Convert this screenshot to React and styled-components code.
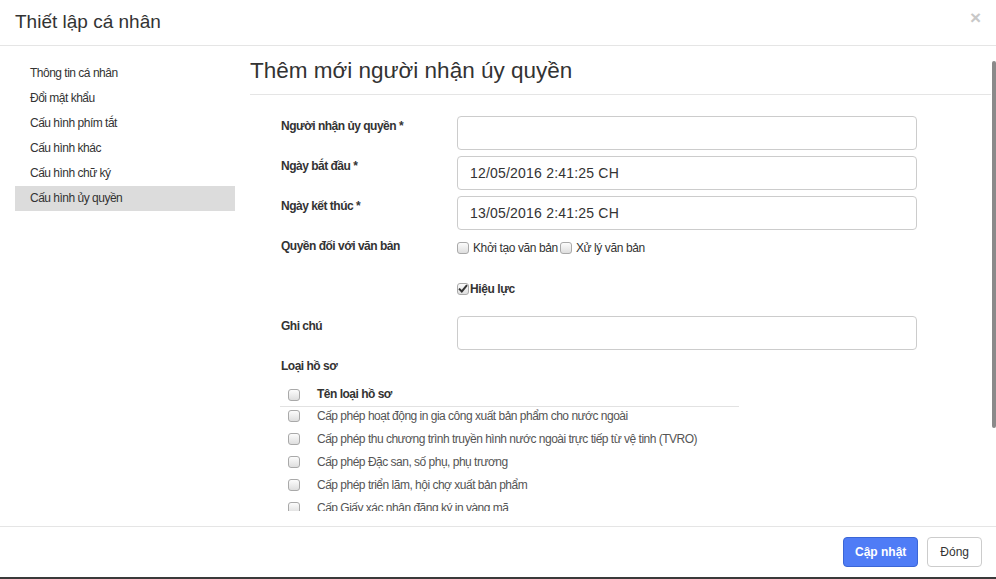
import React from "react";
import styled, { createGlobalStyle } from "styled-components";

const Global = createGlobalStyle`
  html, body { margin: 0; padding: 0; background: #fff; }
  body { font-family: "Liberation Sans", Arial, sans-serif; color: #333; }
  * { box-sizing: border-box; }
`;

const Modal = styled.div`
  width: 996px;
  height: 579px;
  display: flex;
  flex-direction: column;
  background: #fff;
  border-bottom: 2px solid #3a3a3a;
`;

const Header = styled.div`
  height: 46px;
  flex: none;
  display: flex;
  align-items: center;
  justify-content: space-between;
  padding: 0 15px 2px 15px;
  border-bottom: 1px solid #e5e5e5;
`;

const Title = styled.h4`
  margin: 0;
  font-size: 19px;
  font-weight: normal;
  color: #333;
`;

const Close = styled.button`
  border: 0;
  background: none;
  padding: 0;
  margin-bottom: 9px;
  font-family: "Liberation Sans", Arial, sans-serif;
  font-size: 19px;
  font-weight: bold;
  color: #c8c8c8;
  line-height: 1;
  cursor: pointer;
`;

const Body = styled.div`
  height: 480px;
  flex: none;
  display: flex;
  padding: 15px 0 15px 15px;
`;

const Sidebar = styled.ul`
  width: 220px;
  flex: none;
  margin: 0 15px 0 0;
  padding: 0;
  list-style: none;
`;

const NavItem = styled.li`
  height: 25px;
  line-height: 25px;
  padding-left: 15px;
  font-size: 12px;
  letter-spacing: -0.5px;
  color: #333;
  background: ${(p) => (p.$active ? "#dcdcdc" : "transparent")};
`;

const PaneWrap = styled.div`
  position: relative;
  flex: 1;
  height: 450px;
`;

const Pane = styled.div`
  height: 100%;
  overflow: visible;
  clip-path: inset(-12px -12px 0 -12px);
  padding-right: 5px;
`;

const Thumb = styled.div`
  position: absolute;
  top: 0;
  right: 0;
  width: 4px;
  border-radius: 2px;
  background: #8a8a8a;
`;

const PageHeading = styled.h3`
  margin: 0;
  font-size: 22.5px;
  font-weight: normal;
  line-height: 20px;
  padding-bottom: 13px;
  border-bottom: 1px solid #e5e5e5;
  color: #333;
`;

const Form = styled.div`
  padding: 21px 0 0 31px;
`;

const Row = styled.div`
  display: flex;
  height: ${(p) => p.$h || 34}px;
  margin-bottom: ${(p) => (p.$h ? 0 : 6)}px;
`;

const Label = styled.div`
  width: 176px;
  flex: none;
  font-size: 12px;
  font-weight: bold;
  letter-spacing: -0.5px;
  line-height: 17px;
  padding-top: 2px;
  color: #333;
`;

const Input = styled.div`
  width: 460px;
  height: 34px;
  border: 1px solid #ccc;
  border-radius: 4px;
  padding: 0 12px;
  font-size: 14px;
  letter-spacing: 0.2px;
  line-height: 32px;
  color: #333;
`;

const Checks = styled.div`
  display: flex;
  align-items: center;
  height: 17px;
  margin-top: ${(p) => p.$top || 2}px;
  font-size: 12px;
  letter-spacing: -0.4px;
  font-weight: ${(p) => (p.$bold ? "bold" : "normal")};
  color: #333;
`;

const Box = styled.span`
  display: inline-flex;
  align-items: center;
  justify-content: center;
  width: 12px;
  height: 12px;
  flex: none;
  border: 1px solid #a9a9a9;
  border-radius: 3px;
  background: linear-gradient(#fcfcfc, #dedede);
  margin: 0 ${(p) => p.$mr ?? 4}px 0 ${(p) => p.$ml ?? 0}px;
`;

const Table = styled.div`
  width: 459px;
  margin: 0 0 0 -1px;
`;

const THead = styled.div`
  display: flex;
  align-items: flex-start;
  height: 23px;
  padding-top: 3px;
  border-bottom: 1px solid #e2e2e2;
  font-size: 12px;
  letter-spacing: -0.5px;
  font-weight: bold;
  color: #333;
`;

const TRow = styled.div`
  display: flex;
  align-items: flex-start;
  height: 23px;
  padding-top: 1px;
  font-size: 12px;
  letter-spacing: -0.5px;
  color: #555;
  line-height: 17px;
`;

const Cell = styled.div`
  width: 37px;
  flex: none;
  display: flex;
  justify-content: flex-start;
  padding: 2px 0 0 8px;
`;

const Footer = styled.div`
  flex: 1;
  display: flex;
  justify-content: flex-end;
  align-items: flex-start;
  gap: 9px;
  padding: 10px 14px 0 0;
  border-top: 1px solid #e5e5e5;
  background: #fff;
`;

const Button = styled.button`
  height: 30px;
  padding: 0 ${(p) => (p.$primary ? 11 : 12)}px;
  border-radius: 4px;
  border: 1px solid ${(p) => (p.$primary ? "#3b66d6" : "#ccc")};
  background: ${(p) => (p.$primary ? "#4f7cf6" : "#fff")};
  color: ${(p) => (p.$primary ? "#fff" : "#333")};
  font-family: "Liberation Sans", Arial, sans-serif;
  font-size: 12px;
  font-weight: ${(p) => (p.$primary ? "bold" : "normal")};
`;

const menu = [
  "Thông tin cá nhân",
  "Đổi mật khẩu",
  "Cấu hình phím tắt",
  "Cấu hình khác",
  "Cấu hình chữ ký",
  "Cấu hình ủy quyền",
];

const types = [
  "Cấp phép hoạt động in gia công xuất bản phẩm cho nước ngoài",
  "Cấp phép thu chương trình truyền hình nước ngoài trực tiếp từ vệ tinh (TVRO)",
  "Cấp phép Đặc san, số phụ, phụ trương",
  "Cấp phép triển lãm, hội chợ xuất bản phẩm",
  "Cấp Giấy xác nhận đăng ký in vàng mã",
  "Cấp phép nhập khẩu xuất bản phẩm",
  "Cấp phép hoạt động in",
];

const Check = () => (
  <svg width="10" height="9" viewBox="0 0 10 9">
    <path d="M1 4.6 L3.8 7.4 L9 1.2" fill="none" stroke="#333" strokeWidth="2" />
  </svg>
);

export default function App() {
  return (
    <>
      <Global />
      <Modal>
        <Header>
          <Title>Thiết lập cá nhân</Title>
          <Close>×</Close>
        </Header>
        <Body>
          <Sidebar>
            {menu.map((m, i) => (
              <NavItem key={m} $active={i === 5}>
                {m}
              </NavItem>
            ))}
          </Sidebar>
          <PaneWrap>
            <Pane>
              <PageHeading>Thêm mới người nhận úy quyền</PageHeading>
              <Form>
                <Row>
                  <Label>Người nhận ủy quyền *</Label>
                  <Input />
                </Row>
                <Row>
                  <Label>Ngày bắt đầu *</Label>
                  <Input>12/05/2016 2:41:25 CH</Input>
                </Row>
                <Row>
                  <Label>Ngày kết thúc *</Label>
                  <Input>13/05/2016 2:41:25 CH</Input>
                </Row>
                <Row>
                  <Label>Quyền đối với văn bản</Label>
                  <Checks $top={3}>
                    <Box />
                    Khởi tạo văn bản
                    <Box $ml={2} $mr={4} />
                    Xử lý văn bản
                  </Checks>
                </Row>
                <Row>
                  <Label />
                  <Checks $top={4} $bold>
                    <Box $mr={1}>
                      <Check />
                    </Box>
                    Hiệu lực
                  </Checks>
                </Row>
                <Row>
                  <Label>Ghi chú</Label>
                  <Input />
                </Row>
                <Row $h={28}>
                  <Label>Loại hồ sơ</Label>
                </Row>
                <Table>
                  <THead>
                    <Cell>
                      <Box />
                    </Cell>
                    Tên loại hồ sơ
                  </THead>
                  {types.map((t) => (
                    <TRow key={t}>
                      <Cell>
                        <Box />
                      </Cell>
                      {t}
                    </TRow>
                  ))}
                </Table>
              </Form>
            </Pane>
            <Thumb style={{ height: 367 }} />
          </PaneWrap>
        </Body>
        <Footer>
          <Button $primary>Cập nhật</Button>
          <Button>Đóng</Button>
        </Footer>
      </Modal>
    </>
  );
}
